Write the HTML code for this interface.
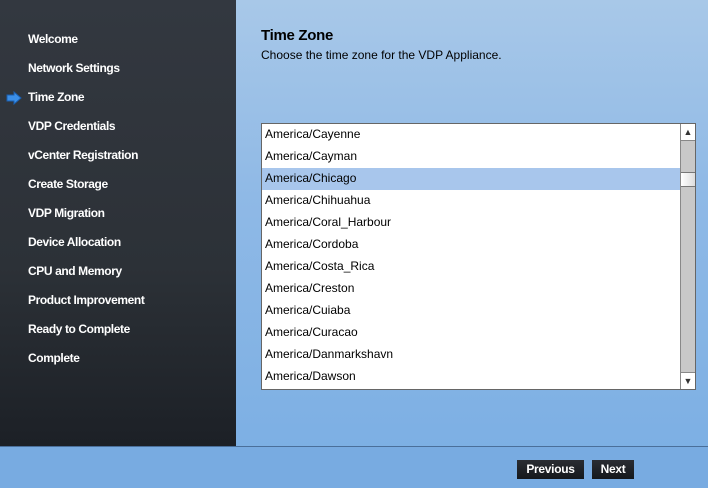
<!DOCTYPE html>
<html><head><style>
*{margin:0;padding:0;box-sizing:border-box}
body{width:708px;height:488px;overflow:hidden;font-family:"Liberation Sans",sans-serif;background:linear-gradient(180deg,#a8c8e8 0%,#8fb9e6 40%,#7aaee3 100%);position:relative}
.side{position:absolute;left:0;top:0;width:236px;height:446px;background:linear-gradient(180deg,#333840 0%,#2c3137 60%,#1c2026 100%)}
.side div{position:absolute;left:28px;color:#fff;font-size:12px;font-weight:bold;letter-spacing:-0.4px}
.bottom{position:absolute;left:0;top:446px;width:708px;height:42px;background:#78abe1;border-top:1px solid #4a6f9a}
h1{position:absolute;left:261px;top:27px;font-size:15px;font-weight:bold;color:#000;letter-spacing:-0.3px}
.sub{position:absolute;left:261px;top:48px;font-size:12px;color:#000}
.list{position:absolute;left:261px;top:123px;width:435px;height:267px;background:#fff;border:1px solid #666;overflow:hidden}
.row{position:absolute;left:0;width:419px;height:22px;font-size:12px;line-height:20px;padding-left:3px;color:#000}
.sel{background:#a8c6ec}
.sb{position:absolute;right:0;top:0;width:15px;height:265px;background:#c8c8c8;border-left:1px solid #888}
.btn{position:absolute;top:460px;height:19px;background:linear-gradient(#2a2d33,#15181c);color:#fff;font-size:12px;font-weight:bold;line-height:19px;text-align:center;letter-spacing:-0.3px}
</style></head><body>
<div class="side">
<div style="top:32px">Welcome</div>
<div style="top:61px">Network Settings</div>
<div style="top:90px">Time Zone</div>
<div style="top:119px">VDP Credentials</div>
<div style="top:148px">vCenter Registration</div>
<div style="top:177px">Create Storage</div>
<div style="top:206px">VDP Migration</div>
<div style="top:235px">Device Allocation</div>
<div style="top:264px">CPU and Memory</div>
<div style="top:293px">Product Improvement</div>
<div style="top:322px">Ready to Complete</div>
<div style="top:351px">Complete</div>
<svg style="position:absolute;left:6px;top:91px" width="16" height="14"><path d="M1 4h7V1l7 6-7 6V10H1z" fill="#3b8fe8" stroke="#1a5fb0" stroke-width="1"/></svg>
</div>
<h1>Time Zone</h1>
<div class="sub">Choose the time zone for the VDP Appliance.</div>
<div class="list">
<div class="row" style="top:0">America/Cayenne</div>
<div class="row" style="top:22px">America/Cayman</div>
<div class="row sel" style="top:44px">America/Chicago</div>
<div class="row" style="top:66px">America/Chihuahua</div>
<div class="row" style="top:88px">America/Coral_Harbour</div>
<div class="row" style="top:110px">America/Cordoba</div>
<div class="row" style="top:132px">America/Costa_Rica</div>
<div class="row" style="top:154px">America/Creston</div>
<div class="row" style="top:176px">America/Cuiaba</div>
<div class="row" style="top:198px">America/Curacao</div>
<div class="row" style="top:220px">America/Danmarkshavn</div>
<div class="row" style="top:242px">America/Dawson</div>
<div class="sb">
<div style="position:absolute;top:0;left:0;width:14px;height:17px;background:#fff;border-bottom:1px solid #888;text-align:center;font-size:9px;line-height:17px;color:#333">▲</div>
<div style="position:absolute;top:48px;left:0;width:14px;height:15px;background:linear-gradient(90deg,#fff,#ddd);border-top:1px solid #777;border-bottom:1px solid #777"></div>
<div style="position:absolute;bottom:0;left:0;width:14px;height:17px;background:#fff;border-top:1px solid #888;text-align:center;font-size:9px;line-height:17px;color:#333">▼</div>
</div>
</div>
<div class="bottom"></div>
<div class="btn" style="left:517px;width:67px">Previous</div>
<div class="btn" style="left:592px;width:42px">Next</div>
</body></html>
